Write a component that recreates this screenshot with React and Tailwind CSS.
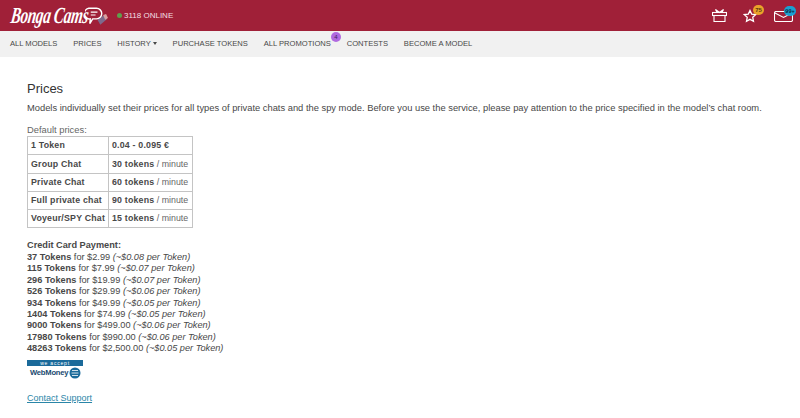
import React from "react";

const rows = [
  ["1 Token", "0.04 - 0.095 €", ""],
  ["Group Chat", "30 tokens", " / minute"],
  ["Private Chat", "60 tokens", " / minute"],
  ["Full private chat", "90 tokens", " / minute"],
  ["Voyeur/SPY Chat", "15 tokens", " / minute"],
];
const prices = [
  ["37", "$2.99", "~$0.08"],
  ["115", "$7.99", "~$0.07"],
  ["296", "$19.99", "~$0.07"],
  ["526", "$29.99", "~$0.06"],
  ["934", "$49.99", "~$0.05"],
  ["1404", "$74.99", "~$0.05"],
  ["9000", "$499.00", "~$0.06"],
  ["17980", "$990.00", "~$0.06"],
  ["48263", "$2,500.00", "~$0.05"],
];

function Logo() {
  return (
    <div className="flex items-center w-[97px]">
      <span className="font-['Liberation_Serif'] font-bold italic text-[23px] leading-none text-white -skew-x-12 scale-x-[0.66] origin-left w-[76px] whitespace-nowrap tracking-[-0.5px]">Bonga Cams</span>
      <svg width="24" height="22" viewBox="0 0 24 22" className="-ml-[2px]">
        <path d="M13 15l7-5 3 4-7 6z" fill="#7d6a8c" />
        <path d="M19 10l3-1 2 4-3 2z" fill="#d9a0a0" />
        <path d="M4 3h8a5.500 5.500 0 0 1 0 11H8l-3 5 .5-5A5.500 5.500 0 0 1 4 3z" fill="none" stroke="#fff" strokeWidth="1.500" />
        <path d="M6 7h7M6 10h5" stroke="#fff" strokeWidth="1.200" />
      </svg>
    </div>
  );
}

export default function App() {
  return (
    <div className="w-[800px] h-[418px] overflow-hidden bg-white font-['Liberation_Sans',Arial,sans-serif] text-[#484848]">
      <header className="h-[31px] bg-[#a02038] flex items-center pl-[11px] pr-[7px]">
        <Logo />
        <span className="ml-[9px] w-[5px] h-[5px] rounded-full bg-[#5f9e4c]" />
        <span className="ml-[2px] text-[8px] text-[#f3dfe3]">3118 ONLINE</span>
        <div className="ml-auto flex items-center">
          <svg width="15" height="13" viewBox="0 0 15 13" fill="none" stroke="#fff" strokeWidth="1.100" className="mr-[16px] mt-[-1px]">
            <rect x="0.500" y="3.500" width="14" height="3" />
            <path d="M2 6.500v6h11v-6M5 3.500L3.500 .5 7.500 3.500 11.500 .5 10 3.500" />
          </svg>
          <div className="relative mr-[17px] w-[14px] h-[14px]">
            <svg width="14" height="14" viewBox="0 0 24 24" fill="none" stroke="#fff" strokeWidth="2.200">
              <path d="M12 2.500l2.900 6.300 6.800.8-5 4.700 1.300 6.800-6-3.400-6 3.400 1.300-6.800-5-4.700 6.800-.8z" />
            </svg>
            <span className="absolute -top-[4px] left-[10px] w-[11px] h-[10px] rounded-full bg-[#eaa22a] text-[6px] font-bold leading-[10px] text-center text-[#5a3a10]">75</span>
          </div>
          <div className="relative w-[19px] h-[11px] mt-[1px]">
            <svg width="19" height="11" viewBox="0 0 19 11" fill="none" stroke="#fff" strokeWidth="1.100">
              <rect x="0.500" y="0.500" width="18" height="10" rx="1.500" />
              <path d="M1 2l8.500 4.500L18 2" />
            </svg>
            <span className="absolute -top-[5px] left-[10px] w-[12px] h-[10px] rounded-full bg-[#1c9fd0] text-[5.500px] font-bold leading-[10px] text-center text-[#0c2a44]">99+</span>
          </div>
        </div>
      </header>
      <nav className="h-[26px] bg-[#f1f1f1] flex items-center pl-[10px] text-[7.600px] text-[#484848]">
        <span>ALL MODELS</span>
        <span className="ml-[15.800px]">PRICES</span>
        <span className="ml-[15.800px] flex items-center">HISTORY<span className="ml-[2px] w-0 h-0 border-x-[2.500px] border-x-transparent border-t-[3px] border-t-[#484848]" /></span>
        <span className="ml-[15.800px]">PURCHASE TOKENS</span>
        <span className="ml-[15.800px] relative">ALL PROMOTIONS
          <span className="absolute -top-[6px] -right-[10px] w-[10px] h-[10px] rounded-full bg-[#b06ae0] text-[6px] leading-[10px] text-center text-[#402060]">4</span>
        </span>
        <span className="ml-[15.800px]">CONTESTS</span>
        <span className="ml-[15.800px]">BECOME A MODEL</span>
      </nav>
      <main className="pl-[27px] pt-[24px]">
        <h1 className="text-[13px] leading-[16px] text-[#333]">Prices</h1>
        <p className="mt-[5px] text-[9.360px] leading-[12px]">Models individually set their prices for all types of private chats and the spy mode. Before you use the service, please pay attention to the price specified in the model’s chat room.</p>
        <div className="mt-[11px] text-[9.360px] leading-[10px] text-[#666]">Default prices:</div>
        <table className="border-collapse text-[8.800px] mt-[1px]">
          <tbody>
            {rows.map((r) => (
              <tr key={r[0]} className="h-[18.300px]">
                <td className="border border-[#c4c4c4] w-[81px] pl-[3px] font-bold tracking-[0.2px] leading-none whitespace-nowrap">{r[0]}</td>
                <td className="border border-[#c4c4c4] w-[84px] pl-[3px] leading-none whitespace-nowrap"><b className="tracking-[0.2px]">{r[1]}</b><span className="text-[#666]">{r[2]}</span></td>
              </tr>
            ))}
          </tbody>
        </table>
        <div className="mt-[12px] text-[9.200px] leading-[11.400px]">
          <b className="block">Credit Card Payment:</b>
          {prices.map((p) => (
            <div key={p[0]}><b>{p[0]} Tokens</b> for {p[1]} <i>({p[2]} per Token)</i></div>
          ))}
        </div>
        <div className="mt-[5px] w-[56px]">
          <div className="h-[6px] bg-[#1a6a9a] text-[5px] leading-[6px] text-center text-white tracking-[0.8px]">we accept</div>
          <div className="flex items-center h-[14px] font-bold text-[7.600px] text-[#1a4a70] tracking-[-0.2px]">
            <span className="ml-[3px]">WebMoney</span>
            <svg width="12" height="12" viewBox="0 0 12 12" className="ml-[1px]">
              <circle cx="6" cy="6" r="5.500" fill="#1a6a9a" />
              <path d="M3 3.500h6M2.500 6h7M3 8.500h6" stroke="#fff" strokeWidth="0.800" />
            </svg>
          </div>
        </div>
        <a className="block mt-[12px] text-[9px] leading-[12px] text-[#2a86a8] underline">Contact Support</a>
      </main>
    </div>
  );
}
